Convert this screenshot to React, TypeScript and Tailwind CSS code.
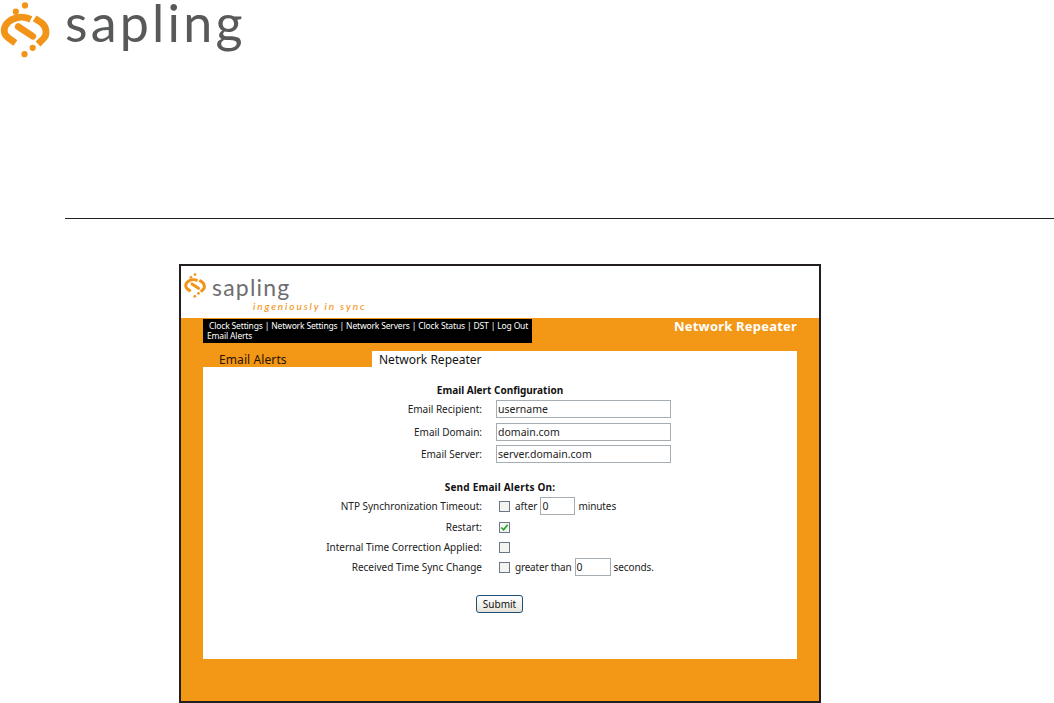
const font = "font-['Noto_Sans',sans-serif]";

function LogoMark({ className }: { className: string }) {
  return (
    <svg viewBox="0 0 50 58" className={className} fill="none" aria-hidden>
      <circle cx="25" cy="3.5" r="3.2" fill="#f29417" />
      <circle cx="15.5" cy="10" r="3.2" fill="#f29417" />
      <circle cx="33" cy="47.5" r="3.2" fill="#f29417" />
      <circle cx="24.5" cy="54" r="3.2" fill="#f29417" />
      <path d="M31 18 C24 14.5 14 15 8 20.5 C2 25.5 2 33 7.5 37 L15 42.5" stroke="#f29417" strokeWidth="7" />
      <path d="M35 17 L42 21.5 C48 26 48 35 44 38 L38.5 43.5" stroke="#f29417" strokeWidth="7" />
      <path d="M18 25.5 L33 35.5" stroke="#f29417" strokeWidth="7" strokeLinecap="round" />
    </svg>
  );
}

function Row({ label, mt, children }: { label: string; mt: string; children: React.ReactNode }) {
  return (
    <div className={`flex h-[18px] items-center ${mt}`}>
      <div className="w-[279px] text-right">{label}</div>
      <div className="ml-[14px] flex items-center">{children}</div>
    </div>
  );
}

function Box({ checked }: { checked?: boolean }) {
  return (
    <span className="ml-[3px] flex h-[11px] w-[11px] items-center justify-center border border-[#6b7785] bg-[#f4f4f0]">
      {checked && (
        <svg viewBox="0 0 10 10" className="h-[9px] w-[9px]" fill="none" aria-hidden>
          <path d="M1.5 5 L4 7.5 L8.5 2" stroke="#21a121" strokeWidth="1.8" />
        </svg>
      )}
    </span>
  );
}

function Field({ value, width }: { value: string; width: string }) {
  return (
    <div className={`flex h-[18px] ${width} items-center border border-[#a5acb2] bg-white pl-[1px] text-[10.5px] text-[#222]`}>
      {value}
    </div>
  );
}

export default function App() {
  return (
    <div className={`h-[703px] w-[1054px] overflow-hidden bg-white ${font}`}>
      <header className="flex h-[218px] items-start">
        <LogoMark className="mt-[2px] h-[56px] w-[50px] shrink-0" />
        <span className="ml-[15px] block font-['Lato',sans-serif] text-[52px] leading-[44px] font-normal tracking-[3.2px] text-[#58595b]">
          sapling
        </span>
      </header>
      <div className="ml-[65px] h-px bg-[#222]" />

      <div className="ml-[179px] mt-[45px] flex h-[439px] w-[642px] flex-col border-2 border-[#231f20]">
        <div className="relative h-[52px] bg-white">
          <LogoMark className="absolute left-[3px] top-[7px] h-[25px] w-[22px]" />
          <span className="absolute left-[31px] top-[9px] font-['Lato',sans-serif] text-[23px] leading-[24px] font-normal tracking-[1.2px] text-[#6d6e70]">
            sapling
          </span>
          <span className="absolute left-[72px] top-[33px] font-['Lato',sans-serif] text-[10px] leading-[14px] font-medium italic tracking-[1.9px] text-[#f29417]">
            ingeniously in sync
          </span>
        </div>

        <div className="flex flex-1 flex-col bg-[#f29716] pl-[22px] pr-[22px]">
          <div className="flex items-start justify-between pt-px">
            <nav className="h-[24px] w-[329px] whitespace-nowrap bg-black pl-[4px] text-[8.5px] leading-[10px] tracking-[-0.16px] text-white">
              <div className="pl-[2px] pt-[2px]">Clock Settings | Network Settings | Network Servers | Clock Status | DST | Log Out</div>
              <div>Email Alerts</div>
            </nav>
            <div className="text-[13px] leading-[15px] font-bold tracking-[0.2px] text-white">Network Repeater</div>
          </div>

          <div className="mt-[8px] flex h-[16px] text-[12px] leading-[16px]">
            <div className="w-[169px] pl-[16px] pt-px tracking-[0.1px] text-[#2a1400]">Email Alerts</div>
            <div className="flex-1 bg-white pl-[7px] pt-px text-[#111]">Network Repeater</div>
          </div>

          <form className="h-[292px] bg-white pt-[16px] text-[10px] leading-[14px] text-[#222]">
            <div className="h-[14px] text-center font-bold text-[#111]">Email Alert Configuration</div>
            <Row label="Email Recipient:" mt="mt-[3px]">
              <Field value="username" width="w-[175px]" />
            </Row>
            <Row label="Email Domain:" mt="mt-[5px]">
              <Field value="domain.com" width="w-[175px]" />
            </Row>
            <Row label="Email Server:" mt="mt-[4px]">
              <Field value="server.domain.com" width="w-[175px]" />
            </Row>

            <div className="mt-[17px] h-[14px] text-center font-bold tracking-[0.2px] text-[#111]">Send Email Alerts On:</div>
            <Row label="NTP Synchronization Timeout:" mt="mt-[3px]">
              <Box />
              <span className="ml-[5px] mr-[3px]">after</span>
              <Field value="0" width="w-[35px]" />
              <span className="ml-[3px] tracking-[-0.1px]">minutes</span>
            </Row>
            <Row label="Restart:" mt="mt-[3px]">
              <Box checked />
            </Row>
            <Row label="Internal Time Correction Applied:" mt="mt-[2px]">
              <Box />
            </Row>
            <Row label="Received Time Sync Change" mt="mt-[2px]">
              <Box />
              <span className="ml-[5px] mr-[3px] tracking-[-0.2px]">greater than</span>
              <Field value="0" width="w-[36px]" />
              <span className="ml-[3px] tracking-[-0.1px]">seconds.</span>
            </Row>

            <div className="mt-[19px] flex justify-center">
              <button
                type="button"
                className="ml-[-1px] h-[18px] w-[47px] rounded-[3px] border border-[#1c4f7c] bg-gradient-to-b from-white to-[#e6e4d8] text-[10px] leading-[14px] text-[#111]"
              >
                Submit
              </button>
            </div>
          </form>
        </div>
      </div>
    </div>
  );
}
